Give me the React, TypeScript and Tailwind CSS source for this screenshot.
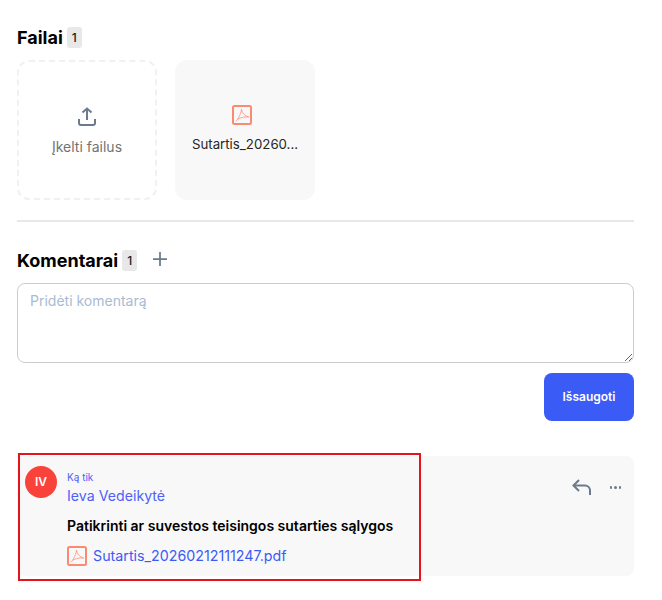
function PdfIcon({ className }: { className?: string }) {
  return (
    <svg width="20" height="20" viewBox="0 0 20 20" fill="none" className={`shrink-0 ${className ?? ''}`}>
      <rect x="1" y="1" width="18" height="18" rx="1.5" stroke="#fb8a72" strokeWidth="2" />
      <path
        d="M4 16c1.500-1 4.500-5.500 5.500-11.500M9.500 4.500c.5 3.500 3 6.500 7 7.500M16.500 12c-3.500-.5-7 .3-10.500 2"
        stroke="#fb8a72"
        strokeWidth="1"
        strokeLinecap="round"
        opacity="0.75"
      />
    </svg>
  );
}

function UploadIcon() {
  return (
    <svg width="18" height="19" viewBox="0 0 18 19" fill="none" className="text-[#6b7a8d]">
      <path d="M9 1.500V13M4.500 5.500 9 1.500l4.500 4" stroke="currentColor" strokeWidth="2" />
      <path d="M1 12V16a2 2 0 0 0 2 2h12a2 2 0 0 0 2-2v-4" stroke="currentColor" strokeWidth="2" />
    </svg>
  );
}

function ReplyIcon() {
  return (
    <svg width="19" height="16" viewBox="0 0 19 16" fill="none" className="text-[#6b7a8d]">
      <path d="M7 1 1.500 6.500 7 12" stroke="currentColor" strokeWidth="2" />
      <path d="M1.500 6.500H13a5 5 0 0 1 5 5V16" stroke="currentColor" strokeWidth="2" />
    </svg>
  );
}

function Badge({ children }: { children: React.ReactNode }) {
  return (
    <span className="flex h-[21px] w-[15px] items-center justify-center rounded-[3px] bg-[#e8e8e8] text-xs font-medium text-[#1a1a1a]">
      {children}
    </span>
  );
}

export default function App() {
  return (
    <div className="h-[600px] w-[662px] overflow-hidden bg-white pl-[17px] pr-[28px] pt-[27px] font-['Inter',sans-serif]">
      {/* Failai */}
      <div className="flex h-[21px] items-center gap-[4px]">
        <h2 className="text-lg font-bold text-black">Failai</h2>
        <Badge>1</Badge>
      </div>
      <div className="mt-3 flex gap-[18px]">
        <div className="flex h-[140px] w-[140px] flex-col items-center rounded-xl border-2 border-dashed border-[#eef1f5] pt-[45px]">
          <UploadIcon />
          <span className="mt-[11px] text-sm text-[#737373]">Įkelti failus</span>
        </div>
        <div className="flex h-[140px] w-[140px] flex-col items-center rounded-xl bg-[#f8f8f8] pt-[45px]">
          <PdfIcon className="mr-[6px]" />
          <span className="mt-[10px] text-[13.25px] text-[#262626]">Sutartis_20260...</span>
        </div>
      </div>

      <div className="mt-5 border-t-2 border-[#e8e8e8]" />

      {/* Komentarai */}
      <div className="mt-[28px] flex h-[21px] items-center gap-[4px]">
        <h2 className="text-lg font-bold text-black">Komentarai</h2>
        <Badge>1</Badge>
        <svg width="14" height="14" viewBox="0 0 14 14" fill="none" className="-mt-[4px] ml-[12px] text-[#6b7a8d]">
          <path d="M7 0v14M0 7h14" stroke="currentColor" strokeWidth="1.75" />
        </svg>
      </div>
      <textarea
        placeholder="Pridėti komentarą"
        className="mt-3 block h-20 w-full rounded-lg border border-[#cccccc] px-3 py-[7px] text-sm placeholder:text-[#a9bbd3]"
      />
      <div className="mt-[10px] flex justify-end">
        <button className="h-12 w-[90px] rounded-lg bg-[#3b5bf6] text-xs font-semibold text-white">
          Išsaugoti
        </button>
      </div>

      {/* Comment */}
      <div className="relative mt-[35px] flex h-[120px] justify-between rounded-lg bg-[#f8f8f8] pl-2 pr-[13px] pt-[10px]">
        <div className="flex gap-[10px]">
          <div className="flex h-8 w-8 items-center justify-center rounded-full bg-[#f9423a] text-xs font-semibold text-white">
            IV
          </div>
          <div className="mt-1">
            <div className="text-[10px] leading-[14px] text-[#4f5ff7]">Ką tik</div>
            <div className="mt-[3px] text-[14.2px] leading-[18px] text-[#4f5ff7]">Ieva Vedeikytė</div>
            <p className="mt-3 text-sm font-semibold leading-[18px] text-black">
              Patikrinti ar suvestos teisingos sutarties sąlygos
            </p>
            <div className="mt-[10px] flex items-center gap-[6px]">
              <PdfIcon />
              <span className="text-[14.25px] text-[#3b5bf6]">Sutartis_20260212111247.pdf</span>
            </div>
          </div>
        </div>
        <div className="flex items-start gap-[19px] pt-[13px]">
          <ReplyIcon />
          <div className="mt-[7px] flex gap-[2px]">
            <span className="h-[2.500px] w-[2.500px] rounded-full bg-[#6b7a8d]" />
            <span className="h-[2.500px] w-[2.500px] rounded-full bg-[#6b7a8d]" />
            <span className="h-[2.500px] w-[2.500px] rounded-full bg-[#6b7a8d]" />
          </div>
        </div>
        <div className="absolute left-[1px] top-[-3px] h-[128px] w-[403px] border-2 border-[#e5141c]" />
      </div>
    </div>
  );
}
